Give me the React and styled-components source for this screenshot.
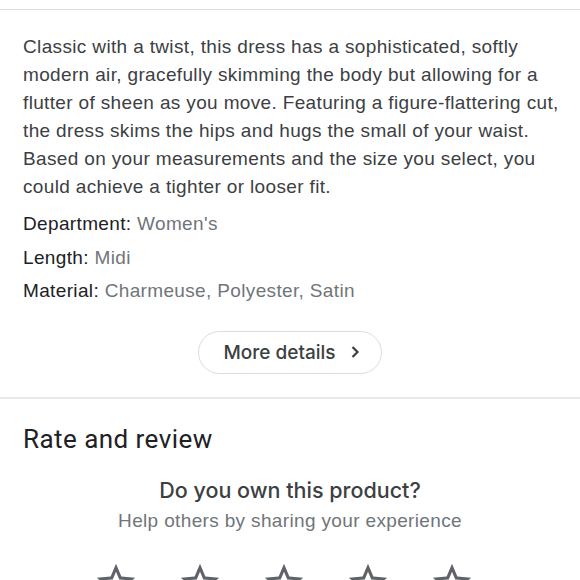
import React from 'react'
import styled, { createGlobalStyle } from 'styled-components'

const GlobalStyle = createGlobalStyle`
  body {
    margin: 0;
    background: #fff;
    font-family: "Liberation Sans", Arial, sans-serif;
    -webkit-font-smoothing: antialiased;
  }
`

const Page = styled.div`
  width: 580px;
  height: 580px;
  overflow: hidden;
  display: flex;
  flex-direction: column;
`

const TopRule = styled.div`
  height: 9px;
  border-bottom: 1px solid #dadce0;
  flex-shrink: 0;
`

const Description = styled.section`
  padding: 23px 14px 0 23px;
  display: flex;
  flex-direction: column;
`

const Text = styled.p`
  margin: 0 0 6px;
  font-size: 19px;
  letter-spacing: 0.35px;
  line-height: 28px;
  color: #3c4043;
`

const Attr = styled.div`
  font-size: 19px;
  letter-spacing: 0.35px;
  line-height: 33.5px;
  color: #202124;
`

const AttrValue = styled.span`
  color: #70757a;
`

const MoreButton = styled.button`
  align-self: center;
  margin: 23px 0 0 -9px;
  height: 43px;
  padding: 0 21px 0 24px;
  border: 1px solid #dadce0;
  border-radius: 22px;
  background: #fff;
  display: flex;
  align-items: center;
  gap: 14px;
  font-family: Inter, "Liberation Sans", sans-serif;
  font-weight: 500;
  font-size: 19px;
  color: #3c4043;
  cursor: pointer;
`

const Divider = styled.div`
  margin-top: 23px;
  height: 2px;
  background: #e8e8e8;
  flex-shrink: 0;
`

const Review = styled.section`
  padding: 24px 23px 0;
  display: flex;
  flex-direction: column;
`

const Heading = styled.h2`
  margin: 0;
  font-family: Roboto, "Liberation Sans", sans-serif;
  font-weight: 400;
  font-size: 26px;
  letter-spacing: 0.45px;
  line-height: 32px;
  color: #202124;
`

const Question = styled.div`
  margin-top: 21px;
  text-align: center;
  font-family: Inter, "Liberation Sans", sans-serif;
  font-size: 21.5px;
  line-height: 28px;
  font-weight: 500;
  color: #3c4043;
`

const Hint = styled.div`
  margin-top: 3px;
  text-align: center;
  font-size: 19px;
  letter-spacing: 0.35px;
  line-height: 28px;
  color: #70757a;
`

const Stars = styled.div`
  margin-top: 25px;
  display: flex;
  justify-content: center;
  gap: 38px;
  padding-right: 12px;
`

const Chevron = () => (
  <svg width="10" height="14" viewBox="0 0 10 14">
    <path d="M2.5 2l5 5-5 5" fill="none" stroke="#3c4043" strokeWidth="2.2" />
  </svg>
)

const Star = () => (
  <svg width="46" height="46" viewBox="0 0 24 24">
    <path
      fill="#5f6368"
      d="M22 9.24l-7.19-.62L12 2 9.19 8.63 2 9.24l5.46 4.73L5.82 21 12 17.27 18.18 21l-1.63-7.03L22 9.24zM12 15.4l-3.76 2.27 1-4.28-3.32-2.88 4.38-.38L12 6.1l1.71 4.04 4.38.38-3.32 2.88 1 4.28L12 15.4z"
    />
  </svg>
)

const attrs = [
  ['Department', "Women's"],
  ['Length', 'Midi'],
  ['Material', 'Charmeuse, Polyester, Satin'],
]

const App = () => (
  <Page>
    <GlobalStyle />
    <TopRule />
    <Description>
      <Text>
        Classic with a twist, this dress has a sophisticated, softly modern air,
        gracefully skimming the body but allowing for a flutter of sheen as you
        move. Featuring a figure-flattering cut, the dress skims the hips and hugs
        the small of your waist. Based on your measurements and the size you
        select, you could achieve a tighter or looser fit.
      </Text>
      {attrs.map(([label, value]) => (
        <Attr key={label}>
          {label}: <AttrValue>{value}</AttrValue>
        </Attr>
      ))}
      <MoreButton>
        More details
        <Chevron />
      </MoreButton>
    </Description>
    <Divider />
    <Review>
      <Heading>Rate and review</Heading>
      <Question>Do you own this product?</Question>
      <Hint>Help others by sharing your experience</Hint>
      <Stars>
        {[1, 2, 3, 4, 5].map((n) => (
          <Star key={n} />
        ))}
      </Stars>
    </Review>
  </Page>
)

export default App
